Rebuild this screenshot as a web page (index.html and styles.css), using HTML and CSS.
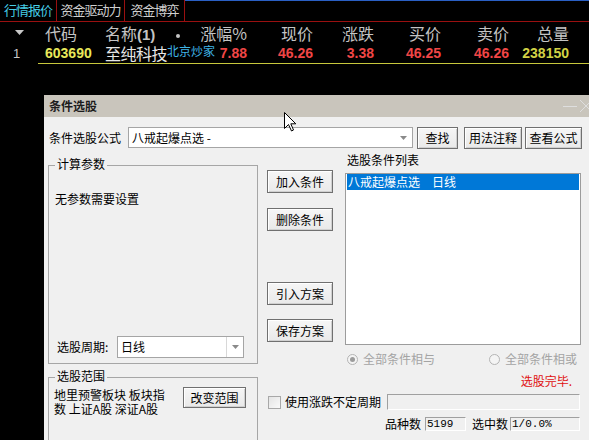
FILE: index.html
```html
<!DOCTYPE html>
<html lang="zh">
<head>
<meta charset="utf-8">
<title>条件选股</title>
<link rel="stylesheet" href="styles.css">
</head>
<body>
<div class="screen">
  <div class="tabs">
    <div class="tab t1 active">行情报价</div>
    <div class="tab t2">资金驱动力</div>
    <div class="tab t3">资金博弈</div>
    <div class="tab-fill"></div>
  </div>
  <div class="grid head">
    <div class="c-idx"><svg class="tri" width="9" height="5" viewBox="0 0 9 5"><polygon points="0,0 9,0 4.5,5" fill="#c8c8c8"/></svg></div>
    <div class="c-code">代码</div>
    <div class="c-name">名称<span class="paren">(1)</span><span class="dot"></span></div>
    <div class="num">涨幅%</div>
    <div class="num">现价</div>
    <div class="num">涨跌</div>
    <div class="num">买价</div>
    <div class="num">卖价</div>
    <div class="num">总量</div>
    <div></div>
  </div>
  <div class="grid row">
    <div class="c-idx idx">1</div>
    <div class="c-code code">603690</div>
    <div class="c-name name">至纯科技<span class="tag">北京炒家</span></div>
    <div class="num val red">7.88</div>
    <div class="num val red">46.26</div>
    <div class="num val red">3.38</div>
    <div class="num val red">46.25</div>
    <div class="num val red">46.26</div>
    <div class="num val yel">238150</div>
    <div></div>
  </div>
  <div class="row-line"></div>
</div>

<div class="dialog">
  <div class="titlebar">
    <span class="title">条件选股</span>
    <svg class="winctl" width="30" height="22" viewBox="0 0 30 22">
      <line x1="0" y1="11.5" x2="14" y2="11.5" stroke="#dedede" stroke-width="1"/>
      <line x1="17" y1="5" x2="29" y2="17" stroke="#dedede" stroke-width="1"/>
      <line x1="29" y1="5" x2="17" y2="17" stroke="#dedede" stroke-width="1"/>
    </svg>
  </div>
  <div class="dlg-body">
    <div class="frow">
      <span class="flabel">条件选股公式</span>
      <div class="combo fcombo">
        <span class="combo-text">八戒起爆点选 -</span>
        <span class="combo-btn"><svg width="7" height="4" viewBox="0 0 7 4"><polygon points="0,0 7,0 3.5,4" fill="#8a8a8a"/></svg></span>
      </div>
      <button class="btn b-find">查找</button>
      <button class="btn b-note">用法注释</button>
      <button class="btn b-view">查看公式</button>
    </div>

    <div class="main">
      <div class="group grp1">
        <span class="legend">计算参数</span>
        <div class="noparam">无参数需要设置</div>
        <div class="period">
          <span class="plabel">选股周期:</span>
          <div class="combo pcombo">
            <span class="combo-text">日线</span>
            <span class="combo-btn sep"><svg width="7" height="4" viewBox="0 0 7 4"><polygon points="0,0 7,0 3.5,4" fill="#8a8a8a"/></svg></span>
          </div>
        </div>
      </div>

      <div class="btncol">
        <button class="btn mbtn">加入条件</button>
        <button class="btn mbtn m2">删除条件</button>
        <button class="btn mbtn m3">引入方案</button>
        <button class="btn mbtn m4">保存方案</button>
      </div>

      <div class="rcol">
        <div class="llabel">选股条件列表</div>
        <div class="listbox">
          <div class="item sel">八戒起爆点选　日线</div>
        </div>
        <div class="radios">
          <label class="radio"><span class="rdot on"></span>全部条件相与</label>
          <label class="radio"><span class="rdot"></span>全部条件相或</label>
        </div>
      </div>
    </div>

    <div class="lower">
      <div class="group grp2">
        <span class="legend">选股范围</span>
        <div class="scope">
          <div class="scope-text">地里预警板块 板块指数 上证A股 深证A股</div>
          <button class="btn b-range">改变范围</button>
        </div>
      </div>
      <div class="rlow">
        <div class="done">选股完毕.</div>
        <div class="chkrow">
          <span class="chk"></span>
          <span class="chktext">使用涨跌不定周期</span>
          <div class="progress"></div>
        </div>
        <div class="counts">
          <span class="clabel">品种数</span>
          <span class="cbox cb1">5199</span>
          <span class="clabel cl2">选中数</span>
          <span class="cbox cb2">1/0.0%</span>
        </div>
      </div>
    </div>
  </div>
</div>

<svg class="cursor" width="13" height="20" viewBox="0 0 13 20">
  <path d="M0.5,0.5 L0.5,16.5 L4.5,12.5 L7.5,19 L9.5,18 L6.8,11.8 L11.8,11.8 Z" fill="#ffffff" stroke="#000000" stroke-width="1" stroke-linejoin="miter"/>
</svg>
</body>
</html>
```

FILE: styles.css
```css
* { box-sizing: border-box; }

body {
  margin: 0;
  width: 589px;
  height: 440px;
  overflow: hidden;
  position: relative;
  background: #000;
  font-family: "Noto Sans CJK SC", "Liberation Sans", sans-serif;
}

/* ---------- quote screen ---------- */
.tabs {
  display: flex;
  height: 22px;
  border-bottom: 1px solid #9a1010;
}
.tab {
  height: 21px;
  line-height: 20px;
  font-size: 13px;
  letter-spacing: -1px;
  color: #cfcfcf;
  text-align: center;
  border-right: 1px solid #9a1010;
}
.tab.t1 { width: 57px; }
.tab.t2 { width: 68px; }
.tab.t3 { width: 60px; }
.tab.active { color: #46cde6; }
.tab-fill {
  flex: 1;
  border-top: 1px solid #2a5fc4;
}

.grid {
  display: grid;
  grid-template-columns: 38px 62px 100px 47px 66px 61px 67px 68px 60px 1fr;
}
.head {
  height: 22px;
  line-height: 22px;
  font-size: 16px;
  color: #c4c4c4;
}
.head .c-idx {
  display: flex;
  align-items: center;
  justify-content: center;
}
.tri { margin-top: -3px; }
.c-code { padding-left: 7px; }
.c-name { padding-left: 5px; position: relative; white-space: nowrap; }
.paren { font-family: "Liberation Sans", sans-serif; font-weight: bold; font-size: 15px; }
.dot {
  display: inline-block;
  width: 4px;
  height: 4px;
  margin-left: 21px;
  border-radius: 50%;
  background: #c4c4c4;
  vertical-align: middle;
}
.num { text-align: right; }

.row {
  height: 19px;
  line-height: 19px;
}
.idx {
  padding-left: 13px;
  font-family: "Liberation Sans", sans-serif;
  font-size: 13px;
  color: #c8c8c8;
}
.code, .val {
  font-family: "Liberation Sans", sans-serif;
  font-weight: bold;
  font-size: 14px;
}
.code { color: #e8e85a; }
.name { font-size: 16px; letter-spacing: -0.5px; color: #e6e6e6; }
.tag {
  position: absolute;
  left: 67px;
  top: 0;
  font-size: 12px;
  letter-spacing: 0;
  line-height: 13px;
  color: #3fb4e6;
}
.red { color: #f04646; }
.yel { color: #d2d245; }
.row-line {
  margin-left: 38px;
  height: 1px;
  background: #c8c83c;
}

/* ---------- dialog ---------- */
.dialog {
  position: absolute;
  left: 44px;
  top: 95px;
  width: 556px;
  height: 345px;
  background: #f0f0f0;
  overflow: hidden;
  font-size: 12px;
  color: #000;
}
.titlebar {
  height: 22px;
  background: #c9c5bc;
  display: flex;
  align-items: center;
  justify-content: space-between;
  padding: 0 7px 0 5px;
}
.title {
  font-weight: bold;
  font-size: 12px;
  line-height: 22px;
  color: #1c1c1c;
}

.dlg-body { padding-left: 4px; }

.frow {
  display: flex;
  align-items: flex-start;
  margin-top: 10px;
  height: 22px;
}
.flabel {
  margin-left: 1px;
  width: 72px;
  line-height: 21px;
  white-space: nowrap;
}

.combo {
  display: flex;
  background: #fff;
  border: 1px solid #a5a5a5;
}
.combo-text {
  flex: 1;
  padding-left: 3px;
  white-space: nowrap;
}
.combo-btn {
  width: 17px;
  display: flex;
  align-items: center;
  justify-content: center;
}
.combo-btn.sep { border-left: 1px solid #d8d8d8; }
.fcombo {
  margin-left: 7px;
  width: 285px;
  height: 21px;
  line-height: 19px;
}

.btn {
  font-family: "Noto Sans CJK SC", sans-serif;
  font-size: 12px;
  line-height: 14px;
  color: #000;
  padding: 0;
  background: linear-gradient(#f6f6f6, #e9e9e9);
  border: 1px solid #707070;
  box-shadow: inset 1px 1px 0 #ffffff, inset -1px -1px 0 #d0d0d0;
  border-radius: 0;
}
.b-find { margin-left: 4px; width: 41px; height: 22px; }
.b-note { margin-left: 6px; width: 58px; height: 22px; }
.b-view { margin-left: 3px; width: 57px; height: 22px; }

.main {
  display: flex;
  align-items: flex-start;
}

.group {
  position: relative;
  width: 210px;
  border: 1px solid #a6a6a6;
}
.legend {
  position: absolute;
  top: -9px;
  left: 6px;
  padding: 0 2px;
  line-height: 14px;
  background: #f0f0f0;
}
.grp1 {
  margin-top: 16px;
  height: 199px;
  display: flex;
  flex-direction: column;
  padding: 26px 0 5px 6px;
}
.noparam { line-height: 14px; }
.period {
  margin-top: auto;
  display: flex;
  align-items: center;
  padding-left: 2px;
}
.plabel { width: 60px; line-height: 14px; }
.pcombo {
  width: 127px;
  height: 22px;
  line-height: 20px;
}

.btncol {
  margin-left: 9px;
  margin-top: 21px;
  width: 66px;
  display: flex;
  flex-direction: column;
}
.mbtn { height: 23px; width: 66px; }
.m2 { margin-top: 15px; }
.m3 { margin-top: 51px; }
.m4 { margin-top: 14px; }

.rcol {
  margin-left: 12px;
  width: 236px;
}
.llabel {
  margin-top: 4px;
  padding-left: 2px;
  line-height: 14px;
}
.listbox {
  margin-top: 6px;
  height: 172px;
  background: #fff;
  border: 1px solid #9c9c9c;
  padding: 0 1px;
}
.item {
  height: 16px;
  line-height: 16px;
  padding-left: 1px;
  white-space: nowrap;
}
.item.sel { background: #0078d7; color: #fff; }

.radios {
  margin-top: 7px;
  height: 14px;
  display: flex;
  justify-content: space-between;
  padding: 0 4px 0 2px;
  color: #a4a4a4;
  line-height: 14px;
}
.radio { display: flex; align-items: center; }
.rdot {
  width: 11px;
  height: 11px;
  margin-right: 5px;
  border-radius: 50%;
  border: 1px solid #b4b4b4;
  background: #f4f4f4;
  display: flex;
  align-items: center;
  justify-content: center;
}
.rdot.on::after {
  content: "";
  width: 5px;
  height: 5px;
  border-radius: 50%;
  background: #9c9c9c;
}

.lower {
  display: flex;
  align-items: flex-start;
}
.grp2 {
  margin-top: 11px;
  height: 80px;
  padding: 10px 0 0 5px;
}
.scope {
  display: flex;
  align-items: flex-start;
}
.scope-text {
  width: 118px;
  line-height: 14px;
  word-break: break-all;
}
.b-range {
  margin-left: 11px;
  margin-top: -1px;
  width: 63px;
  height: 21px;
}

.rlow {
  margin-left: 10px;
  margin-top: 8px;
  width: 312px;
  display: flex;
  flex-direction: column;
}
.done {
  text-align: right;
  padding-right: 8px;
  line-height: 14px;
  color: #e01010;
}
.chkrow {
  margin-top: 6px;
  height: 16px;
  display: flex;
  align-items: center;
}
.chk {
  width: 13px;
  height: 13px;
  border: 1px solid #a8a8a8;
  background: linear-gradient(135deg, #e4e4e4, #fafafa);
}
.chktext {
  margin-left: 4px;
  line-height: 14px;
  white-space: nowrap;
}
.progress {
  margin-left: 6px;
  flex: 1;
  height: 16px;
  border-top: 1px solid #a0a0a0;
  border-left: 1px solid #a0a0a0;
  border-bottom: 1px solid #ffffff;
  border-right: 1px solid #ffffff;
}
.counts {
  margin-top: 7px;
  height: 14px;
  display: flex;
  justify-content: flex-end;
  align-items: center;
}
.clabel { line-height: 14px; }
.cl2 { margin-left: 6px; }
.cbox {
  height: 14px;
  line-height: 12px;
  padding-left: 1px;
  font-family: "Liberation Mono", monospace;
  font-size: 11px;
  border-top: 1px solid #a0a0a0;
  border-left: 1px solid #a0a0a0;
  border-bottom: 1px solid #ffffff;
  border-right: 1px solid #ffffff;
}
.cb1 { margin-left: 4px; width: 41px; }
.cb2 { margin-left: 2px; width: 70px; }

.cursor {
  position: absolute;
  left: 284px;
  top: 112px;
}
```
